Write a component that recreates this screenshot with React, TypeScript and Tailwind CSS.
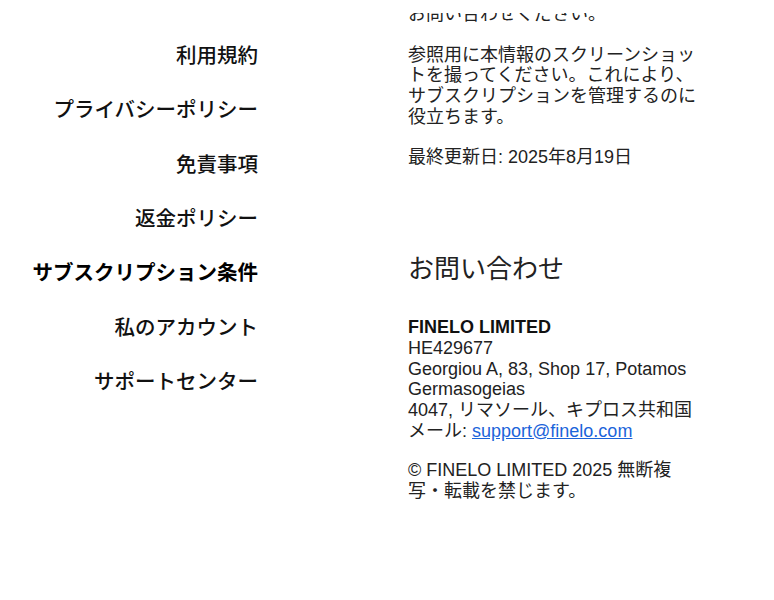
import React from "react";

const font = { fontFamily: '"Liberation Sans", "Noto Sans CJK JP", sans-serif' };

const nav = [
  { label: "利用規約" },
  { label: "プライバシーポリシー" },
  { label: "免責事項" },
  { label: "返金ポリシー" },
  { label: "サブスクリプション条件", active: true },
  { label: "私のアカウント" },
  { label: "サポートセンター" },
];

export default function App() {
  return (
    <div
      className="flex h-[600px] w-[774px] overflow-hidden bg-white"
      style={font}
    >
      <nav className="flex w-[258px] shrink-0 flex-col pt-[29px] text-[20.5px] text-[#111]">
        {nav.map((n) => (
          <a
            key={n.label}
            href="#"
            className={`flex h-[54.33px] items-center justify-end leading-none ${
              n.active ? "font-bold text-black" : "font-medium"
            }`}
          >
            {n.label}
          </a>
        ))}
      </nav>
      <main className="ml-[150px] w-[292px] shrink-0 text-[18px] leading-[20.7px] text-[#222]">
        <div className="mt-[13px] h-[11.85px] overflow-hidden">
          <p className="-mt-[8.85px]">お問い合わせください。</p>
        </div>
        <p className="mt-[19.8px]">
          参照用に本情報のスクリーンショットを撮ってください。これにより、サブスクリプションを管理するのに役立ちます。
        </p>
        <p className="mt-[19.2px]">最終更新日: 2025年8月19日</p>
        <h2 className="mt-[87px] text-[26px] leading-[30px] font-normal text-[#222]">
          お問い合わせ
        </h2>
        <div className="mt-[33px]">
          <p className="font-bold text-[#111]">FINELO LIMITED</p>
          <p>HE429677</p>
          <p>Georgiou A, 83, Shop 17, Potamos Germasogeias</p>
          <p>4047, リマソール、キプロス共和国</p>
          <p>
            メール:{" "}
            <a href="#" className="text-[#1b64da] underline">
              support@finelo.com
            </a>
          </p>
        </div>
        <p className="mt-[18.8px]">© FINELO LIMITED 2025 無断複写・転載を禁じます。</p>
      </main>
    </div>
  );
}
